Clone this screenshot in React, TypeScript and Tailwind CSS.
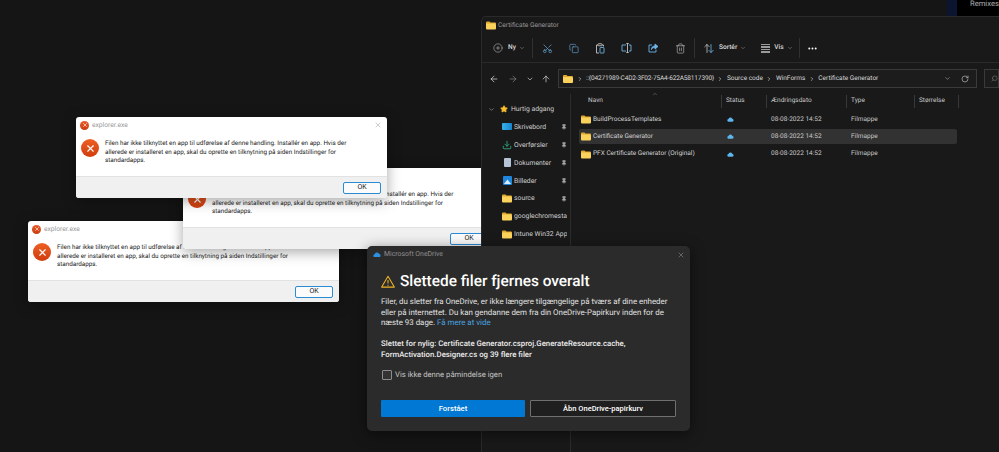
import { Scissors, ChevronDown, ChevronRight, ArrowLeft, ArrowRight, ArrowUp, RotateCw, Search, X, Pin, Star, Download, CirclePlus, Trash2, MoreHorizontal, Copy } from "lucide-react";

function Folder({ className = "w-[10px] h-[9px]" }: { className?: string }) {
  return (
    <svg viewBox="0 0 20 16" className={className}>
      <path d="M0 2a2 2 0 0 1 2-2h5l2 2h9a2 2 0 0 1 2 2v1H0z" fill="#e0a92e" />
      <path d="M0 4h18a2 2 0 0 1 2 2v8a2 2 0 0 1-2 2H2a2 2 0 0 1-2-2z" fill="#fbd35c" />
    </svg>
  );
}

function Cloud({ color = "#5db5ee", className = "w-[7px] h-[5px]" }: { color?: string; className?: string }) {
  return (
    <svg viewBox="0 0 20 13" className={className}>
      <path d="M5 13a4 4 0 0 1-1-7.9A6 6 0 0 1 15 4.2 4.5 4.5 0 0 1 15.5 13z" fill={color} />
    </svg>
  );
}

function ErrorIcon({ size }: { size: "sm" | "lg" }) {
  return (
    <div
      className={
        size === "lg"
          ? "w-[18px] h-[18px] shrink-0 rounded-full bg-gradient-to-b from-[#ee5f24] to-[#cf3d0d] flex items-center justify-center"
          : "w-[9px] h-[9px] shrink-0 rounded-full bg-gradient-to-b from-[#e85d2a] to-[#c93b10] flex items-center justify-center"
      }
    >
      <X className={size === "lg" ? "w-[11px] h-[11px] text-white" : "w-[6px] h-[6px] text-white"} strokeWidth={2.4} />
    </div>
  );
}

function ErrorDialog({ className, showClose }: { className: string; showClose?: boolean }) {
  return (
    <div className={`absolute w-[311px] h-[81px] flex flex-col rounded-[3px] overflow-hidden bg-white shadow-[0_3px_14px_rgba(0,0,0,0.35)] ${className}`}>
      <div className="h-[16px] flex items-center pl-[4px] pr-[5px] gap-[3px]">
        <ErrorIcon size="sm" />
        <span className="text-[6.7px] text-[#9a9a9a] leading-none">explorer.exe</span>
        {showClose && <X className="ml-auto w-[8px] h-[8px] text-[#9a9a9a]" strokeWidth={1.5} />}
      </div>
      <div className="flex-1 flex pl-[5px] pt-[6px] gap-[6px]">
        <ErrorIcon size="lg" />
        <p className="text-[6.3px] leading-[8.7px] text-[#222] w-[262px]">
          Filen har ikke tilknyttet en app til udførelse af denne handling. Installér en app. Hvis der allerede er installeret en app, skal du oprette en tilknytning på siden Indstillinger for standardapps.
        </p>
      </div>
      <div className="h-[22px] bg-[#f0f0f0] border-t border-[#e2e2e2] flex items-center justify-end pr-[6px]">
        <button className="w-[38px] h-[12px] rounded-[2px] bg-[#fbfbfb] border border-[#2a8ad4] text-[7px] leading-none text-[#222]">OK</button>
      </div>
    </div>
  );
}

function ToolDivider() {
  return <div className="w-px h-[20px] bg-[#303030]" />;
}

function Toolbar() {
  const blue = "text-[#6cb4e8]";
  return (
    <div className="h-[29px] flex items-center border-b border-[#2a2a2a] text-[#dcdcdc] text-[6.6px] font-medium">
      <CirclePlus className="ml-[11px] w-[10px] h-[10px] text-[#b8b8b8]" strokeWidth={1.4} />
      <span className="ml-[5px]">Ny</span>
      <ChevronDown className="ml-[3px] w-[6px] h-[6px] text-[#999]" />
      <div className="ml-[7px]"><ToolDivider /></div>
      <Scissors className={`ml-[9px] w-[11px] h-[11px] -rotate-90 ${blue}`} strokeWidth={1.4} />
      <Copy className={`ml-[16px] w-[10px] h-[11px] ${blue}`} strokeWidth={1.4} />
      <svg viewBox="0 0 20 22" className="ml-[16px] w-[10px] h-[11px]" fill="none" strokeWidth="1.8">
        <path d="M6 4H3v16h5M14 4h3v3" stroke="#c4c4c4" />
        <rect x="6" y="1.5" width="8" height="4" rx="1" stroke="#c4c4c4" />
        <rect x="10" y="9" width="8" height="11" rx="1" stroke="#6cb4e8" />
      </svg>
      <svg viewBox="0 0 22 20" className="ml-[16px] w-[11px] h-[10px]" fill="none" strokeWidth="1.8">
        <path d="M10 4H2v12h8M16 4h4v12h-4" stroke="#6cb4e8" />
        <path d="M13 1v18M10.5 1h5M10.5 19h5" stroke="#c4c4c4" />
      </svg>
      <svg viewBox="0 0 22 20" className="ml-[16px] w-[11px] h-[10px]" fill="none" strokeWidth="1.8">
        <path d="M8 4H2v14h14v-5" stroke="#6cb4e8" />
        <path d="M14 2l6 5-6 5V9c-4 0-6 1-7 4 0-5 3-7 7-7z" stroke="#6cb4e8" fill="#6cb4e8" />
      </svg>
      <Trash2 className="ml-[16px] w-[11px] h-[11px] text-[#b8b8b8]" strokeWidth={1.4} />
      <div className="ml-[8px]"><ToolDivider /></div>
      <svg viewBox="0 0 20 18" className="ml-[9px] w-[10px] h-[9px]" fill="none" strokeWidth="1.6" strokeLinecap="round">
        <path d="M6 17V1M1.5 5.5 6 1l4.500 4.500" stroke="#c4c4c4" />
        <path d="M14 1v16M9.500 12.500 14 17l4.500-4.500" stroke="#6cb4e8" />
      </svg>
      <span className="ml-[5px]">Sortér</span>
      <ChevronDown className="ml-[3px] w-[6px] h-[6px] text-[#999]" />
      <div className="ml-[15px] w-[9px] flex flex-col gap-[1px]">
        <div className="h-[1.500px] bg-[#9a9a9a]" />
        <div className="h-[1.500px] bg-[#9a9a9a]" />
        <div className="h-[1.500px] bg-[#9a9a9a]" />
        <div className="h-[1.500px] bg-[#9a9a9a]" />
      </div>
      <span className="ml-[4px]">Vis</span>
      <ChevronDown className="ml-[3px] w-[6px] h-[6px] text-[#999]" />
      <div className="ml-[6px]"><ToolDivider /></div>
      <MoreHorizontal className="ml-[7px] w-[11px] h-[11px] text-white" strokeWidth={2.2} />
    </div>
  );
}

function NavBar() {
  const crumbs = ["::{04271989-C4D2-3F02-75A4-622A58117390}", "Source code", "WinForms", "Certificate Generator"];
  return (
    <div className="h-[31px] flex items-center text-[#d8d8d8]">
      <ArrowLeft className="ml-[7px] w-[10px] h-[10px] text-[#e8e8e8]" strokeWidth={1.6} />
      <ArrowRight className="ml-[9px] w-[10px] h-[10px] text-[#8a8a8a]" strokeWidth={1.6} />
      <ChevronDown className="ml-[8px] w-[8px] h-[8px] text-[#cfcfcf]" strokeWidth={2} />
      <ArrowUp className="ml-[7px] w-[10px] h-[10px] text-[#e0e0e0]" strokeWidth={1.6} />
      <div className="ml-[7px] w-[419px] h-[19px] flex items-center bg-[#1c1c1c] border border-[#3a3a3a] text-[6.5px]">
        <Folder className="ml-[4px] w-[10px] h-[8px]" />
        {crumbs.map((c, i) => (
          <div key={c} className="flex items-center">
            <ChevronRight className="mx-[3.500px] w-[6px] h-[6px] text-[#d8d8d8]" strokeWidth={2.4} />
            <span className={i === 0 ? "whitespace-nowrap tracking-[-0.15px]" : "whitespace-nowrap"}>{c}</span>
          </div>
        ))}
        <ChevronDown className="ml-auto w-[7px] h-[7px] text-[#aaa]" strokeWidth={2} />
        <RotateCw className="ml-[10px] mr-[7px] w-[8px] h-[8px] text-[#bbb]" strokeWidth={2} />
      </div>
      <div className="ml-[7px] flex-1 h-[19px] flex items-center bg-[#1c1c1c] border border-[#3a3a3a] pl-[6px]">
        <Search className="w-[7px] h-[7px] text-[#777] -scale-x-100" />
      </div>
    </div>
  );
}

function SideIcon({ name }: { name: string }) {
  if (name === "Skrivebord")
    return <div className="w-[10px] h-[7px] bg-gradient-to-r from-[#37b0ea] to-[#1684cc] rounded-[1px]" />;
  if (name === "Overførsler") return <Download className="w-[10px] h-[10px] text-[#35b083]" strokeWidth={2} />;
  if (name === "Dokumenter") return <div className="w-[7px] h-[9px] bg-[#b4c3d6] rounded-[1px] mx-[1.500px]" />;
  if (name === "Billeder")
    return (
      <svg viewBox="0 0 10 10" className="w-[9px] h-[9px]">
        <rect width="10" height="10" rx="1" fill="#1e86dc" />
        <path d="M1 9l4-5 4 5z" fill="#d8ecfb" />
      </svg>
    );
  return <Folder />;
}

function Sidebar() {
  const items = [
    { name: "Skrivebord", pin: true },
    { name: "Overførsler", pin: true },
    { name: "Dokumenter", pin: true },
    { name: "Billeder", pin: true },
    { name: "source", pin: true },
    { name: "googlechromestan", pin: false },
    { name: "Intune Win32 Apps", pin: false },
  ];
  return (
    <div className="w-[89px] border-r border-[#2c2c2c] text-[#d0d0d0] text-[6.8px] overflow-hidden pt-[6px] h-full shrink-0">
      <div className="h-[18px] flex items-center pl-[6px]">
        <ChevronDown className="w-[7px] h-[7px] text-[#aaa]" strokeWidth={2} />
        <Star className="ml-[5px] w-[8px] h-[8px] text-[#fbc02d] fill-[#fbc02d]" />
        <span className="ml-[3px] whitespace-nowrap">Hurtig adgang</span>
      </div>
      {items.map((it) => (
        <div key={it.name} className="h-[17.900px] flex items-center pl-[20px] pr-[3px]">
          <div className="w-[10px] flex justify-center shrink-0">
            <SideIcon name={it.name} />
          </div>
          <span className="ml-[2px] whitespace-nowrap overflow-hidden flex-1">{it.name}</span>
          {it.pin && <Pin className="w-[6px] h-[6px] text-[#aaa] fill-[#aaa] shrink-0" />}
        </div>
      ))}
    </div>
  );
}

function FileList() {
  const headers = ["Navn", "Status", "Ændringsdato", "Type", "Størrelse"];
  const rows = ["BuildProcessTemplates", "Certificate Generator", "PFX Certificate Generator (Original)"];
  return (
    <div className="flex-1 pl-[8px] text-[6.5px] text-[#c8c8c8]">
      <div className="relative grid grid-cols-[143px_45px_80px_68px_44px] w-[380px] h-[16px] items-center -mt-[1px]">
        <ChevronDown className="absolute left-[73px] -top-[2px] w-[6px] h-[6px] text-[#888] rotate-180" />
        {headers.map((h, i) => (
          <div key={h} className={`h-[13px] flex items-center border-r border-[#383838] ${i === 0 ? "pl-[9px]" : "pl-[4px]"}`}>
            {h}
          </div>
        ))}
      </div>
      <div className="mt-[3px] flex flex-col gap-[2.300px] w-[378px]">
        {rows.map((r, i) => (
          <div key={r} className={`grid grid-cols-[143px_45px_80px_68px_42px] h-[15px] items-center rounded-[2px] ${i === 1 ? "bg-[#323232]" : ""}`}>
            <div className="flex items-center pl-[2px] gap-[2px] whitespace-nowrap text-[#d2d2d2]">
              <Folder />
              {r}
            </div>
            <div className="pl-[5px]"><Cloud /></div>
            <div className="pl-[4px]">08-08-2022 14:52</div>
            <div className="pl-[4px]">Filmappe</div>
            <div />
          </div>
        ))}
      </div>
    </div>
  );
}

function ExplorerWindow() {
  return (
    <div className="absolute left-[481px] top-[16px] right-0 bottom-0 z-20 bg-[#191919] border-l border-t border-[#2a2a2a] rounded-tl-[5px] flex flex-col">
      <div className="h-[17px] flex items-center pl-[4px] gap-[2px]">
        <Folder />
        <span className="text-[6.6px] text-[#9a9a9a]">Certificate Generator</span>
      </div>
      <Toolbar />
      <NavBar />
      <div className="flex flex-1 min-h-0">
        <Sidebar />
        <FileList />
      </div>
    </div>
  );
}

function OneDriveDialog() {
  return (
    <div className="absolute left-[367px] top-[246px] w-[323px] h-[185px] z-30 bg-[#2b2b2b] rounded-[5px] shadow-[0_3px_14px_rgba(0,0,0,0.5)] flex flex-col">
      <div className="h-[17px] flex items-center pl-[6px] pr-[5px] gap-[3px]">
        <Cloud color="#2d8fe0" className="w-[8px] h-[5.500px]" />
        <span className="text-[6.9px] text-[#8f8f8f]">Microsoft OneDrive</span>
        <X className="ml-auto w-[8px] h-[8px] text-[#9a9a9a]" strokeWidth={1.5} />
      </div>
      <div className="px-[14px]">
        <div className="mt-[10px] flex items-center gap-[5px]">
          <svg viewBox="0 0 20 18" className="w-[14px] h-[13px]" fill="none">
            <path d="M10 1.500 19 17H1z" stroke="#f0b429" strokeWidth="1.500" strokeLinejoin="round" />
            <path d="M10 7v5M10 13.500v1.500" stroke="#f0b429" strokeWidth="1.500" />
          </svg>
          <h1 className="text-[15.400px] leading-[16px] font-medium text-white whitespace-nowrap">Slettede filer fjernes overalt</h1>
        </div>
        <p className="mt-[8px] text-[7.900px] leading-[10.600px] text-[#e2e2e2] w-[300px]">
          Filer, du sletter fra OneDrive, er ikke længere tilgængelige på tværs af dine enheder eller på internettet. Du kan gendanne dem fra din OneDrive-Papirkurv inden for de næste 93 dage. <span className="text-[#4aa3e0]">Få mere at vide</span>
        </p>
        <p className="mt-[10px] text-[7.800px] leading-[10.800px] font-medium text-[#ececec] w-[300px]">
          Slettet for nylig: Certificate Generator.csproj.GenerateResource.cache, FormActivation.Designer.cs og 39 flere filer
        </p>
        <div className="mt-[9px] flex items-center gap-[3px]">
          <div className="w-[10px] h-[10px] ml-[1px] border border-[#8c8c8c] rounded-[1px] bg-[#333]" />
          <span className="text-[7.700px] text-[#c4c4c4]">Vis ikke denne påmindelse igen</span>
        </div>
        <div className="mt-[19px] flex gap-[5px] w-[295px]">
          <button className="flex-1 h-[17px] bg-[#0078d4] text-[7.700px] font-medium text-white rounded-[1px]">Forstået</button>
          <button className="flex-1 h-[17px] bg-[#1f1f1f] border border-[#707070] text-[7.500px] font-medium text-white rounded-[1px]">Åbn OneDrive-papirkurv</button>
        </div>
      </div>
    </div>
  );
}

export default function App() {
  return (
    <div className="relative w-[999px] h-[452px] overflow-hidden bg-[#151515] font-['Roboto',sans-serif] [text-rendering:geometricPrecision]">
      {/* whatever sits behind the explorer window */}
      <div className="flex justify-end h-[16px]">
        <div className="w-[10px] bg-[#0b1530]" />
        <div className="w-[42px] bg-black pl-[13px] text-[7.600px] leading-[8px] text-[#b0b0b0] overflow-hidden whitespace-nowrap">Remixes</div>
      </div>

      <ErrorDialog className="left-[28px] top-[221px] z-0" />
      <ErrorDialog className="left-[183px] top-[168px] z-10" />
      <ErrorDialog className="left-[76px] top-[117px] z-40" showClose />
      <ExplorerWindow />
      <OneDriveDialog />
    </div>
  );
}
